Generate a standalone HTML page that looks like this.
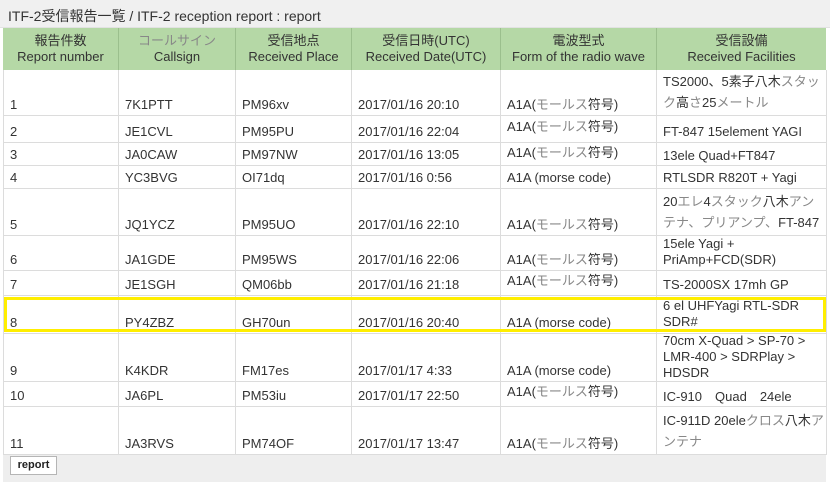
<!DOCTYPE html>
<html><head><meta charset="utf-8"><style>
*{margin:0;padding:0;box-sizing:border-box}
body{width:830px;height:482px;background:#fff;font-family:"Liberation Sans","Noto Sans CJK JP",sans-serif;color:#333;font-size:13px;position:relative;overflow:hidden}
.title{position:absolute;left:0;top:0;width:830px;height:28px;background:#f0f0f0;border-bottom:1px solid #e2e2e2;font-size:14px;padding:6px 0 0 8px;color:#333}
.hd{position:absolute;left:3px;top:28px;width:823px;height:42px;background:#b5d8a6}
.hd div{position:absolute;top:0;height:42px;text-align:center;line-height:16px;padding-top:5px;border-left:1px solid #9bbf8d}
.hd div.first{border-left:none}
.r{position:absolute;left:3px;width:824px;border-bottom:1px solid #dcdcdc}
.r div{position:absolute;top:0;bottom:0;border-left:1px solid #dcdcdc;display:flex;flex-direction:column;justify-content:flex-end;padding:0 3px 2px 6px;line-height:16px;overflow:hidden;white-space:nowrap}
.r div i{display:block;font-style:normal}
.r div.j{line-height:21px;padding-bottom:2px}
.r div.up{padding-bottom:7px}
.r div p{height:21px;line-height:21px}
.a{left:0;width:115px}.b{left:115px;width:117px}.c{left:232px;width:116px}.d{left:348px;width:149px}.e{left:497px;width:156px}.f{left:653px;width:171px;border-right:1px solid #dcdcdc}
.g{color:#888}
.foot{position:absolute;left:3px;top:455px;width:823px;height:27px;background:#eee}
.btn{position:absolute;left:10px;top:456px;width:47px;height:19px;background:#fff;border:1px solid #b5b5b5;font-size:11px;font-weight:bold;text-align:center;line-height:17px;color:#222}
.hl{position:absolute;left:4px;top:297px;width:822px;height:35px;border:3px solid #ffee00}
</style></head><body>
<div class="title">ITF-2受信報告一覧 / ITF-2 reception report : report</div>
<div class="hd">
<div class="a first">報告件数<br>Report number</div><div class="b"><span class="g">コールサイン</span><br>Callsign</div><div class="c">受信地点<br>Received Place</div><div class="d">受信日時(UTC)<br>Received Date(UTC)</div><div class="e">電波型式<br>Form of the radio wave</div><div class="f" style="border-right:none;width:170px">受信設備<br>Received Facilities</div>
</div>

<div class="r" style="top:70px;height:46px"><div class="a"><i>1</i></div><div class="b"><i>7K1PTT</i></div><div class="c"><i>PM96xv</i></div><div class="d"><i>2017/01/16 20:10</i></div><div class="e"><i>A1A(<span class="g">モールス</span>符号)</i></div><div class="f j"><i><p>TS2000、5素子八木<span class="g">スタッ</span></p><p><span class="g">ク</span>高<span class="g">さ</span>25<span class="g">メートル</span></p></i></div></div>

<div class="r" style="top:116px;height:27px"><div class="a"><i>2</i></div><div class="b"><i>JE1CVL</i></div><div class="c"><i>PM95PU</i></div><div class="d"><i>2017/01/16 22:04</i></div><div class="e up"><i>A1A(<span class="g">モールス</span>符号)</i></div><div class="f"><i>FT-847 15element YAGI</i></div></div>

<div class="r" style="top:143px;height:23px"><div class="a"><i>3</i></div><div class="b"><i>JA0CAW</i></div><div class="c"><i>PM97NW</i></div><div class="d"><i>2017/01/16 13:05</i></div><div class="e" style="padding-bottom:4px"><i>A1A(<span class="g">モールス</span>符号)</i></div><div class="f" style="padding-bottom:1px"><i>13ele Quad+FT847</i></div></div>

<div class="r" style="top:166px;height:23px"><div class="a"><i>4</i></div><div class="b"><i>YC3BVG</i></div><div class="c"><i>OI71dq</i></div><div class="d"><i>2017/01/16 0:56</i></div><div class="e"><i>A1A (morse code)</i></div><div class="f"><i>RTLSDR R820T + Yagi</i></div></div>

<div class="r" style="top:189px;height:47px"><div class="a"><i>5</i></div><div class="b"><i>JQ1YCZ</i></div><div class="c"><i>PM95UO</i></div><div class="d"><i>2017/01/16 22:10</i></div><div class="e"><i>A1A(<span class="g">モールス</span>符号)</i></div><div class="f j"><i><p>20<span class="g">エレ</span>4<span class="g">スタック</span>八木<span class="g">アン</span></p><p><span class="g">テナ、プリアンプ、</span>FT-847</p></i></div></div>

<div class="r" style="top:236px;height:35px"><div class="a"><i>6</i></div><div class="b"><i>JA1GDE</i></div><div class="c"><i>PM95WS</i></div><div class="d"><i>2017/01/16 22:06</i></div><div class="e"><i>A1A(<span class="g">モールス</span>符号)</i></div><div class="f"><i>15ele Yagi +<br>PriAmp+FCD(SDR)</i></div></div>

<div class="r" style="top:271px;height:25px"><div class="a"><i>7</i></div><div class="b"><i>JE1SGH</i></div><div class="c"><i>QM06bb</i></div><div class="d"><i>2017/01/16 21:18</i></div><div class="e up" style="padding-bottom:6px"><i>A1A(<span class="g">モールス</span>符号)</i></div><div class="f"><i>TS-2000SX 17mh GP</i></div></div>

<div class="r" style="top:296px;height:38px"><div class="a"><i>8</i></div><div class="b"><i>PY4ZBZ</i></div><div class="c"><i>GH70un</i></div><div class="d"><i>2017/01/16 20:40</i></div><div class="e"><i>A1A (morse code)</i></div><div class="f" style="padding-bottom:3px"><i>6 el UHFYagi RTL-SDR<br>SDR#</i></div></div>

<div class="r" style="top:334px;height:48px"><div class="a"><i>9</i></div><div class="b"><i>K4KDR</i></div><div class="c"><i>FM17es</i></div><div class="d"><i>2017/01/17 4:33</i></div><div class="e"><i>A1A (morse code)</i></div><div class="f" style="padding-bottom:0"><i>70cm X-Quad &gt; SP-70 &gt;<br>LMR-400 &gt; SDRPlay &gt;<br>HDSDR</i></div></div>

<div class="r" style="top:382px;height:25px"><div class="a"><i>10</i></div><div class="b"><i>JA6PL</i></div><div class="c"><i>PM53iu</i></div><div class="d"><i>2017/01/17 22:50</i></div><div class="e up" style="padding-bottom:6px"><i>A1A(<span class="g">モールス</span>符号)</i></div><div class="f" style="padding-bottom:1px"><i>IC-910　Quad　24ele</i></div></div>

<div class="r" style="top:407px;height:48px"><div class="a"><i>11</i></div><div class="b"><i>JA3RVS</i></div><div class="c"><i>PM74OF</i></div><div class="d"><i>2017/01/17 13:47</i></div><div class="e"><i>A1A(<span class="g">モールス</span>符号)</i></div><div class="f j"><i><p>IC-911D 20ele<span class="g">クロス</span>八木<span class="g">ア</span></p><p><span class="g">ンテナ</span></p></i></div></div>

<div class="hl"></div>
<div class="foot"></div>
<div class="btn">report</div>
</body></html>
